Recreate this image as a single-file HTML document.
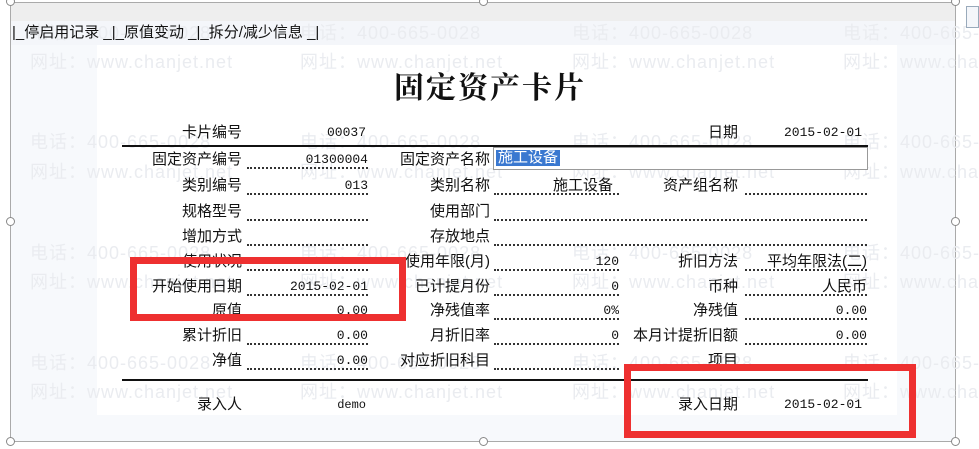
<!DOCTYPE html>
<html><head><meta charset="utf-8"><style>
*{margin:0;padding:0;box-sizing:border-box}
html,body{width:979px;height:449px;overflow:hidden}
body{background:#fff;position:relative;font-family:"Liberation Sans","Noto Sans CJK SC",sans-serif;font-size:15px;color:#111}
.a{position:absolute;white-space:nowrap}
.clip{position:absolute;left:0;top:0;width:979px;height:449px;overflow:hidden}
.wm{position:absolute;color:#eaecf0;font-size:18px;white-space:nowrap;letter-spacing:1px}
.l{position:absolute;text-align:right;white-space:nowrap;height:18px;line-height:18px}
.f{position:absolute;height:18px;line-height:18px;border-bottom:2px dotted #333;text-align:right;white-space:nowrap;font-family:"Liberation Mono","Noto Sans CJK SC",monospace;font-size:13px}
.h{position:absolute;width:9px;height:9px;border:1px solid #888;border-radius:50%;background:#fff}
</style></head><body>
<div class="clip">
<div class="a" style="left:10px;top:2px;width:946px;height:440px;background:#f7f9fc;border:1px solid #aaa"></div>
<div class="a" style="left:11px;top:3px;width:944px;height:18px;background:#eeeeee"></div>
<div class="a" style="left:11px;top:21px;width:944px;height:24px;background:#f4f6fa"></div>
<div class="a" style="left:97px;top:45px;width:800px;height:370px;background:#fff"></div>

<div class="wm" style="left:30px;top:19px">电话：400-665-0028</div>
<div class="wm" style="left:300px;top:19px">电话：400-665-0028</div>
<div class="wm" style="left:572px;top:19px">电话：400-665-0028</div>
<div class="wm" style="left:843px;top:19px">电话：400-665-0028</div>
<div class="wm" style="left:30px;top:48px">网址：www.chanjet.net</div>
<div class="wm" style="left:300px;top:48px">网址：www.chanjet.net</div>
<div class="wm" style="left:572px;top:48px">网址：www.chanjet.net</div>
<div class="wm" style="left:843px;top:48px">网址：www.chanjet.net</div>
<div class="wm" style="left:30px;top:128px">电话：400-665-0028</div>
<div class="wm" style="left:300px;top:128px">电话：400-665-0028</div>
<div class="wm" style="left:572px;top:128px">电话：400-665-0028</div>
<div class="wm" style="left:843px;top:128px">电话：400-665-0028</div>
<div class="wm" style="left:30px;top:158px">网址：www.chanjet.net</div>
<div class="wm" style="left:300px;top:158px">网址：www.chanjet.net</div>
<div class="wm" style="left:572px;top:158px">网址：www.chanjet.net</div>
<div class="wm" style="left:843px;top:158px">网址：www.chanjet.net</div>
<div class="wm" style="left:30px;top:239px">电话：400-665-0028</div>
<div class="wm" style="left:300px;top:239px">电话：400-665-0028</div>
<div class="wm" style="left:572px;top:239px">电话：400-665-0028</div>
<div class="wm" style="left:843px;top:239px">电话：400-665-0028</div>
<div class="wm" style="left:30px;top:268px">网址：www.chanjet.net</div>
<div class="wm" style="left:300px;top:268px">网址：www.chanjet.net</div>
<div class="wm" style="left:572px;top:268px">网址：www.chanjet.net</div>
<div class="wm" style="left:843px;top:268px">网址：www.chanjet.net</div>
<div class="wm" style="left:30px;top:349px">电话：400-665-0028</div>
<div class="wm" style="left:300px;top:349px">电话：400-665-0028</div>
<div class="wm" style="left:572px;top:349px">电话：400-665-0028</div>
<div class="wm" style="left:843px;top:349px">电话：400-665-0028</div>
<div class="wm" style="left:30px;top:378px">网址：www.chanjet.net</div>
<div class="wm" style="left:300px;top:378px">网址：www.chanjet.net</div>
<div class="wm" style="left:572px;top:378px">网址：www.chanjet.net</div>
<div class="wm" style="left:843px;top:378px">网址：www.chanjet.net</div>

<div class="a" style="left:12px;top:24px;font-size:15px;line-height:18px">|_停启用记录 _|_原值变动 _|_拆分/减少信息 _|</div>

<div class="a" style="left:380px;top:63px;width:220px;text-align:center;font-family:'Liberation Serif','Noto Serif CJK SC',serif;font-size:30px;font-weight:bold;letter-spacing:2px">固定资产卡片</div>

<div class="l" style="right:737px;top:124px">卡片编号</div>
<div class="a" style="left:320px;top:124px;width:46px;text-align:right;font-family:'Liberation Mono',monospace;font-size:13px;line-height:18px">00037</div>
<div class="l" style="right:241px;top:124px">日期</div>
<div class="a" style="left:770px;top:124px;width:92px;text-align:right;font-family:'Liberation Mono',monospace;font-size:13px;line-height:18px">2015-02-01</div>
<div class="a" style="left:122px;top:145px;width:746px;height:2px;background:#111"></div>

<div class="a" style="left:493px;top:147px;width:375px;height:23px;border:1px solid #999;background:#fff"></div>
<div class="a" style="left:496px;top:150px;background:#3a78d0;color:#fff;font-size:15px;line-height:16px;padding:0 2px">施工设备</div>

<div class="l" style="right:737px;top:151px">固定资产编号</div><div class="f" style="left:247px;top:151px;width:121px">01300004</div>
<div class="l" style="right:489px;top:151px">固定资产名称</div>

<div class="l" style="right:737px;top:177px">类别编号</div><div class="f" style="left:247px;top:177px;width:121px">013</div>
<div class="l" style="right:489px;top:177px">类别名称</div><div class="f" style="left:494px;top:177px;width:125px;font-family:'Liberation Sans','Noto Sans CJK SC',sans-serif;font-size:15px;padding-right:6px">施工设备</div>
<div class="l" style="right:241px;top:177px">资产组名称</div><div class="f" style="left:745px;top:177px;width:122px"></div>

<div class="l" style="right:737px;top:203px">规格型号</div><div class="f" style="left:247px;top:203px;width:121px"></div>
<div class="l" style="right:489px;top:203px">使用部门</div><div class="f" style="left:494px;top:203px;width:373px"></div>

<div class="l" style="right:737px;top:228px">增加方式</div><div class="f" style="left:247px;top:228px;width:121px"></div>
<div class="l" style="right:489px;top:228px">存放地点</div><div class="f" style="left:494px;top:228px;width:373px"></div>

<div class="l" style="right:737px;top:253px">使用状况</div><div class="f" style="left:247px;top:253px;width:121px"></div>
<div class="l" style="right:489px;top:253px">使用年限(月)</div><div class="f" style="left:494px;top:253px;width:125px">120</div>
<div class="l" style="right:241px;top:253px">折旧方法</div><div class="f" style="left:745px;top:253px;width:122px;font-family:'Liberation Sans','Noto Sans CJK SC',sans-serif;font-size:15px">平均年限法(二)</div>

<div class="l" style="right:737px;top:278px">开始使用日期</div><div class="f" style="left:247px;top:278px;width:121px">2015-02-01</div>
<div class="l" style="right:489px;top:278px">已计提月份</div><div class="f" style="left:494px;top:278px;width:125px">0</div>
<div class="l" style="right:241px;top:278px">币种</div><div class="f" style="left:745px;top:278px;width:122px;font-family:'Liberation Sans','Noto Sans CJK SC',sans-serif;font-size:15px">人民币</div>

<div class="l" style="right:737px;top:302px">原值</div><div class="f" style="left:247px;top:302px;width:121px">0.00</div>
<div class="l" style="right:489px;top:302px">净残值率</div><div class="f" style="left:494px;top:302px;width:125px">0%</div>
<div class="l" style="right:241px;top:302px">净残值</div><div class="f" style="left:745px;top:302px;width:122px">0.00</div>

<div class="l" style="right:737px;top:327px">累计折旧</div><div class="f" style="left:247px;top:327px;width:121px">0.00</div>
<div class="l" style="right:489px;top:327px">月折旧率</div><div class="f" style="left:494px;top:327px;width:125px">0</div>
<div class="l" style="right:241px;top:327px">本月计提折旧额</div><div class="f" style="left:745px;top:327px;width:122px">0.00</div>

<div class="l" style="right:737px;top:352px">净值</div><div class="f" style="left:247px;top:352px;width:121px">0.00</div>
<div class="l" style="right:489px;top:352px">对应折旧科目</div><div class="f" style="left:494px;top:352px;width:125px"></div>
<div class="l" style="right:241px;top:352px">项目</div>

<div class="a" style="left:122px;top:379px;width:746px;height:2px;background:#111"></div>
<div class="l" style="right:737px;top:396px">录入人</div>
<div class="a" style="left:320px;top:396px;width:46px;text-align:right;font-family:'Liberation Mono',monospace;font-size:12px;line-height:18px">demo</div>
<div class="l" style="right:241px;top:396px">录入日期</div>
<div class="a" style="left:770px;top:396px;width:92px;text-align:right;font-family:'Liberation Mono',monospace;font-size:13px;line-height:18px">2015-02-01</div>

<div class="a" style="left:130px;top:257px;width:276px;height:64px;border:7px solid #ee3030"></div>
<div class="a" style="left:624px;top:364px;width:292px;height:74px;border:7px solid #ee3030"></div>

<div class="h" style="left:6px;top:-3px"></div>
<div class="h" style="left:479px;top:-3px"></div>
<div class="h" style="left:951px;top:-3px"></div>
<div class="h" style="left:6px;top:217px"></div>
<div class="h" style="left:951px;top:217px"></div>
<div class="h" style="left:6px;top:437px"></div>
<div class="h" style="left:479px;top:437px"></div>
<div class="h" style="left:951px;top:437px"></div>
<div class="a" style="left:966px;top:6px;width:13px;height:22px;border:1px solid #9ab;background:#f4f6fa"></div>
</div>
</body></html>
